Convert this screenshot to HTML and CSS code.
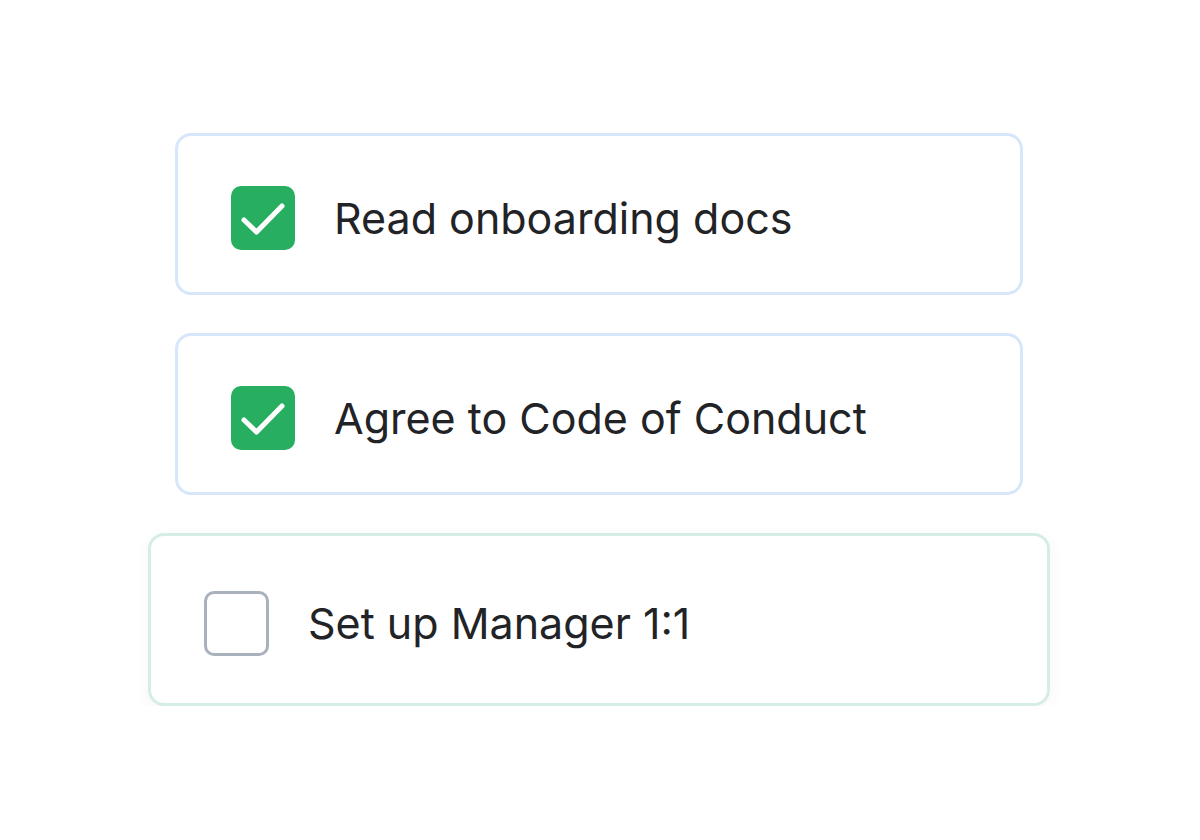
FILE: index.html
```html
<!DOCTYPE html>
<html>
<head>
<meta charset="utf-8">
<link rel="stylesheet" href="styles.css">
</head>
<body>
<div class="list">
  <div class="card done">
    <span class="box checked">
      <svg viewBox="0 0 64 64" width="64" height="64"><path d="M13 34 L25.5 46 L51 20" fill="none" stroke="#fff" stroke-width="5" stroke-linecap="round" stroke-linejoin="round"/></svg>
    </span>
    <span class="label">Read onboarding docs</span>
  </div>
  <div class="card done">
    <span class="box checked">
      <svg viewBox="0 0 64 64" width="64" height="64"><path d="M13 34 L25.5 46 L51 20" fill="none" stroke="#fff" stroke-width="5" stroke-linecap="round" stroke-linejoin="round"/></svg>
    </span>
    <span class="label">Agree to Code of Conduct</span>
  </div>
  <div class="card active">
    <span class="box empty"></span>
    <span class="label">Set up Manager 1:1</span>
  </div>
</div>
</body>
</html>
```
FILE: styles.css
```css
html, body {
  margin: 0;
  padding: 0;
  background: #ffffff;
}
body {
  font-family: Inter, "Noto Sans", sans-serif;
  color: #222326;
}
.list {
  width: 848px;
  margin: 133px 0 0 175px;
  display: flex;
  flex-direction: column;
  gap: 38px;
}
.card {
  box-sizing: border-box;
  height: 162px;
  border: 3px solid #d6e6fb;
  border-radius: 16px;
  background: #fff;
  display: flex;
  align-items: center;
  padding: 8px 53px 0;
  gap: 39px;
}
.card.active {
  height: 173px;
  margin: 0 -27px;
  border-color: #d5eee4;
  box-shadow: 0 4px 18px rgba(0, 0, 0, 0.04);
}
.box {
  box-sizing: border-box;
  width: 64px;
  height: 64px;
  border-radius: 10px;
  flex: none;
  display: block;
}
.box svg {
  display: block;
}
.box.checked {
  background: #27ae60;
}
.box.empty {
  border: 3px solid #a9b1bd;
  border-radius: 10px;
  width: 65px;
  height: 65px;
}
.label {
  font-size: 43px;
  line-height: 1;
  letter-spacing: 0;
}
```
